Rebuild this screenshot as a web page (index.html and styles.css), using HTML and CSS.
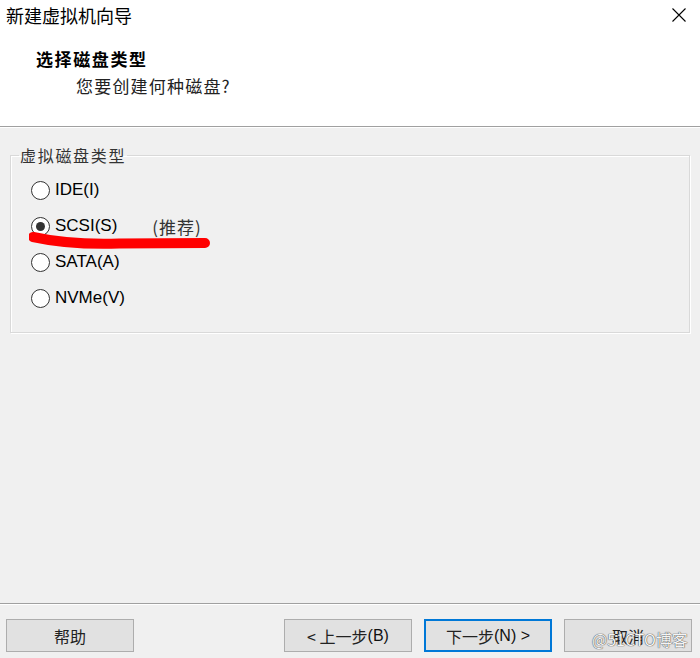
FILE: index.html
```html
<!DOCTYPE html>
<html lang="zh-CN">
<head>
<meta charset="utf-8">
<title>新建虚拟机向导</title>
<link rel="stylesheet" href="styles.css">
</head>
<body>
<div class="window">
  <div class="titlebar">
    <span class="title">新建虚拟机向导</span>
    <svg class="close" width="16" height="16" viewBox="0 0 16 16"><path d="M1.5 1.5 L14.5 14.5 M14.5 1.5 L1.5 14.5" stroke="#000" stroke-width="1.1" fill="none"/></svg>
  </div>
  <div class="header">
    <div class="heading">选择磁盘类型</div>
    <div class="subtitle">您要创建何种磁盘?</div>
  </div>
  <div class="main">
    <fieldset class="group">
      <legend class="legend">虚拟磁盘类型</legend>
      <div class="row"><span class="radio"></span><span class="label">IDE(I)</span></div>
      <div class="row"><span class="radio checked"></span><span class="label">SCSI(S)</span><span class="hint">(推荐)</span></div>
      <div class="row"><span class="radio"></span><span class="label">SATA(A)</span></div>
      <div class="row"><span class="radio"></span><span class="label">NVMe(V)</span></div>
    </fieldset>
    <svg class="mark" width="200" height="30" viewBox="0 0 200 30"><path d="M4 8 Q 40 16 90 14.5 L 176 14" stroke="#f00" stroke-width="10" fill="none" stroke-linecap="round"/></svg>
  </div>
  <div class="footer">
    <button class="btn">帮助</button>
    <div class="spacer"></div>
    <div class="navs">
      <button class="btn">&lt; 上一步<span class="latin">(B)</span></button>
      <button class="btn default">下一步<span class="latin">(N) &gt;</span></button>
      <button class="btn cancel">取消<span class="watermark">@51CTO博客</span></button>
    </div>
  </div>
</div>
</body>
</html>
```
FILE: styles.css
```css
* { box-sizing: border-box; }
html, body { margin: 0; padding: 0; }
body {
  width: 700px;
  height: 658px;
  background: #f0f0f0;
  font-family: "Noto Sans CJK SC", "Liberation Sans", sans-serif;
  color: #000;
  overflow: hidden;
}
.window {
  position: relative;
  display: flex;
  flex-direction: column;
  height: 658px;
}
.titlebar {
  height: 30px;
  background: #fff;
  display: flex;
  align-items: center;
  justify-content: space-between;
  padding: 0 13px 0 6px;
}
.title {
  font-size: 18px;
  line-height: 30px;
}
.close { display: block; }
.header {
  height: 97px;
  background: #fff;
  border-bottom: 1px solid #a0a0a0;
  padding-top: 17px;
}
.heading {
  font-size: 17px;
  font-weight: bold;
  letter-spacing: 1.6px;
  line-height: 24px;
  padding-left: 36px;
}
.subtitle {
  font-size: 17px;
  letter-spacing: 1.2px;
  line-height: 24px;
  padding-left: 76px;
  margin-top: 3px;
  color: #222;
}
.main {
  flex: 1;
  position: relative;
  box-shadow: inset 0 1px 0 #fff;
}
.group {
  margin: 16px 10px 0 10px;
  width: 680px;
  border: 1px solid #d9d9d9;
  box-shadow: inset 1px 1px 0 #fff, 1px 1px 0 #fff;
  padding: 5px 0 16px 20px;
}
.legend {
  font-size: 16px;
  letter-spacing: 1.7px;
  line-height: 24px;
  padding: 0 1px;
  margin-left: -12px;
  color: #333;
}
.row {
  display: flex;
  align-items: center;
  height: 36px;
}
.radio {
  width: 19px;
  height: 19px;
  border: 1px solid #333;
  border-radius: 50%;
  background: #fff;
  display: flex;
  align-items: center;
  justify-content: center;
  flex: none;
}
.radio.checked::after {
  content: "";
  width: 9px;
  height: 9px;
  border-radius: 50%;
  background: #333;
}
.label {
  font-family: "Liberation Sans", "Noto Sans CJK SC", sans-serif;
  font-size: 17px;
  margin-left: 5px;
}
.hint {
  font-size: 17px;
  letter-spacing: 1px;
  margin-left: 35px;
  color: #333;
}
.mark {
  position: absolute;
  left: 29px;
  top: 102px;
}
.footer {
  height: 55px;
  border-top: 1px solid #a0a0a0;
  box-shadow: inset 0 1px 0 #fff;
  display: flex;
  align-items: flex-start;
  padding: 15px 8px 0 6px;
}
.spacer { flex: 1; }
.navs {
  display: flex;
  gap: 12px;
}
.btn {
  position: relative;
  width: 128px;
  height: 33px;
  background: #e1e1e1;
  border: 1px solid #adadad;
  font-family: "Noto Sans CJK SC", "Liberation Sans", sans-serif;
  font-size: 16px;
  color: #222;
  padding: 0;
  display: flex;
  align-items: center;
  justify-content: center;
}
.btn .latin {
  font-family: "Liberation Sans", sans-serif;
  font-size: 16px;
  color: #111;
}
.btn.default {
  border: 2px solid #0078d7;
}
.watermark {
  position: absolute;
  left: 27px;
  top: 7px;
  font-size: 16px;
  color: #f4f4f4;
  text-shadow: 0 0 1px #444, 0 0 1px #444;
  white-space: nowrap;
}
```
